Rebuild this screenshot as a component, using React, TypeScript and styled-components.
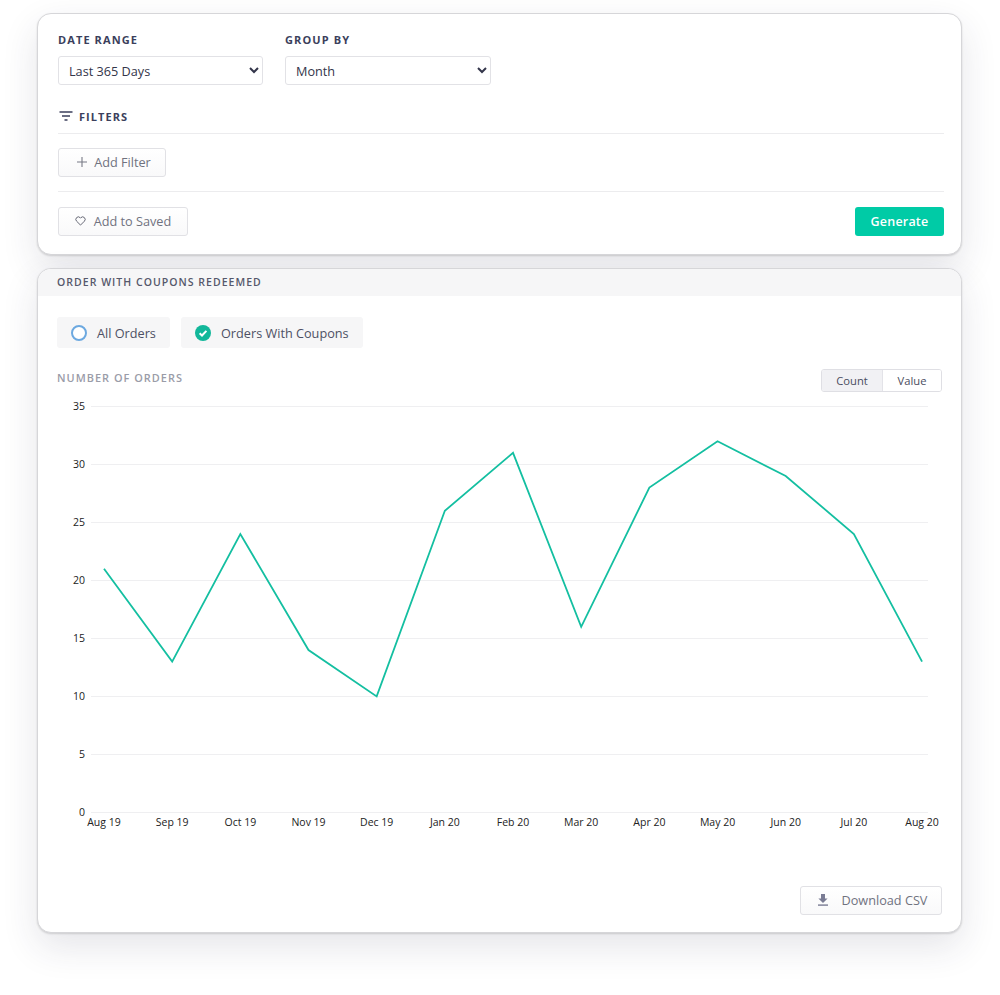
import React from "react";
import styled, { createGlobalStyle } from "styled-components";

const Global = createGlobalStyle`
  html, body { margin: 0; padding: 0; background: #fff; }
  body { font-family: "Open Sans", "Liberation Sans", sans-serif; }
  * { box-sizing: border-box; }
`;

const Page = styled.div`
  width: 1000px;
  height: 995px;
  padding: 13px 38px 0 37px;
  display: flex;
  flex-direction: column;
  gap: 13px;
  overflow: hidden;
`;

const Card = styled.section`
  background: #fff;
  border: 1px solid #d6d6d9;
  border-radius: 14px;
  box-shadow: 0 1px 2px rgba(0, 0, 0, 0.14), 0 14px 36px rgba(40, 44, 70, 0.12);
  overflow: hidden;
`;

const FilterCard = styled(Card)`
  height: 242px;
  padding: 18px 17px 0 20px;
`;

const FieldRow = styled.div`
  display: flex;
  gap: 22px;
`;

const Field = styled.div`
  display: flex;
  flex-direction: column;
  gap: 9px;
`;

const FieldLabel = styled.label`
  font-size: 11px;
  line-height: 15px;
  font-weight: 700;
  letter-spacing: 1.1px;
  color: #3b3f5c;
`;

const Select = styled.select<{ $w: number }>`
  width: ${(p) => p.$w}px;
  height: 29px;
  border: 1px solid #e2e2e6;
  border-radius: 3px;
  background: #fff;
  color: #33354a;
  font-family: inherit;
  font-size: 12.7px;
  padding: 0 2px 0 6px;
`;

const FilterHead = styled.div`
  display: flex;
  align-items: center;
  gap: 6px;
  margin-top: 22px;
  height: 18px;
  padding-left: 1px;
  font-size: 11px;
  font-weight: 700;
  letter-spacing: 1.05px;
  color: #3b3f5c;
`;

const Rule = styled.div<{ $top: number }>`
  height: 1px;
  background: #ececee;
  margin-top: ${(p) => p.$top}px;
`;

const GhostButton = styled.button<{ $w: number; $top?: number; $gap?: number; $left?: number }>`
  display: flex;
  align-items: center;
  justify-content: center;
  gap: ${(p) => p.$gap ?? 7}px;
  width: ${(p) => p.$w}px;
  height: 29px;
  margin-top: ${(p) => p.$top ?? 0}px;
  border: 1px solid #e1e1e5;
  border-radius: 3px;
  background: linear-gradient(#ffffff, #f9f9fa);
  color: #70727f;
  font-family: inherit;
  font-size: 12.7px;
  padding: 0 0 2px ${(p) => p.$left ?? 0}px;
`;

const ActionRow = styled.div`
  display: flex;
  justify-content: space-between;
  align-items: center;
  margin-top: 15px;
`;

const Generate = styled.button`
  width: 89px;
  height: 29px;
  border: 0;
  border-radius: 3px;
  background: #00cba6;
  color: #fff;
  font-family: inherit;
  font-size: 12.5px;
  font-weight: 600;
  letter-spacing: 0.2px;
  padding: 0;
`;

const ChartCard = styled(Card)`
  height: 665px;
`;

const CardTitle = styled.header`
  height: 27px;
  background: #f6f6f7;
  padding: 0 0 2px 19px;
  display: flex;
  align-items: center;
  font-size: 10.5px;
  font-weight: 600;
  letter-spacing: 1.03px;
  color: #55586b;
`;

const TabRow = styled.div`
  display: flex;
  gap: 11px;
  margin: 21px 0 0 19px;
`;

const Tab = styled.div<{ $w: number }>`
  display: flex;
  align-items: center;
  gap: 10px;
  width: ${(p) => p.$w}px;
  height: 31px;
  padding-left: 14px;
  background: #f6f6f7;
  border-radius: 3px;
  font-size: 12.7px;
  color: #4d5064;
`;

const Ring = styled.span`
  width: 16px;
  height: 16px;
  border-radius: 50%;
  border: 2px solid #6da9e0;
  background: #fff;
`;

const ChartHead = styled.div`
  display: flex;
  justify-content: space-between;
  align-items: center;
  margin: 21px 19px 0 19px;
  height: 23px;
`;

const AxisTitle = styled.div`
  font-size: 10.9px;
  font-weight: 600;
  letter-spacing: 1.03px;
  color: #9a9ca8;
  padding-bottom: 6px;
`;

const Toggle = styled.div`
  display: flex;
  height: 23px;
  border: 1px solid #dfdfe4;
  border-radius: 3px;
  overflow: hidden;
`;

const ToggleItem = styled.div<{ $on?: boolean; $w: number }>`
  width: ${(p) => p.$w}px;
  display: flex;
  align-items: center;
  justify-content: center;
  font-size: 11.2px;
  color: #4a4d60;
  background: ${(p) => (p.$on ? "#f1f1f4" : "#fff")};
  border-right: ${(p) => (p.$on ? "1px solid #e3e3e8" : "0")};
`;

const Plot = styled.svg`
  display: block;
  width: 923px;
  height: 450px;
  font-family: "Open Sans", "Liberation Sans", sans-serif;
`;

const Footer = styled.div`
  display: flex;
  justify-content: flex-end;
  margin: 44px 19px 0 0;
`;

const values = [21, 13, 24, 14, 10, 26, 31, 16, 28, 32, 29, 24, 13];
const months = ["Aug 19", "Sep 19", "Oct 19", "Nov 19", "Dec 19", "Jan 20", "Feb 20", "Mar 20", "Apr 20", "May 20", "Jun 20", "Jul 20", "Aug 20"];
const ticks = [35, 30, 25, 20, 15, 10, 5, 0];

// The plot's origin on the page
const OX = 38;
const OY = 392;
const px = (i: number) => 104 + i * 68.17 - OX;
const py = (v: number) => 812 - v * 11.6 - OY;

export default function App() {
  return (
    <Page>
      <Global />
      <FilterCard>
        <FieldRow>
          <Field>
            <FieldLabel>DATE RANGE</FieldLabel>
            <Select $w={205} defaultValue="Last 365 Days">
              <option>Last 365 Days</option>
            </Select>
          </Field>
          <Field>
            <FieldLabel>GROUP BY</FieldLabel>
            <Select $w={206} defaultValue="Month">
              <option>Month</option>
            </Select>
          </Field>
        </FieldRow>
        <FilterHead>
          <svg width="14" height="10" viewBox="0 0 14 10" fill="none" stroke="#3b3f5c" strokeWidth="1.3">
            <path d="M0.5 1h13M3 5h8M5.5 9h3" />
          </svg>
          FILTERS
        </FilterHead>
        <Rule $top={8} />
        <GhostButton $w={108} $top={14} $left={4}>
          <svg width="10" height="10" viewBox="0 0 10 10" fill="none" stroke="#777985" strokeWidth="1.1">
            <path d="M5 0v10M0 5h10" />
          </svg>
          Add Filter
        </GhostButton>
        <Rule $top={14} />
        <ActionRow>
          <GhostButton $w={130} $gap={8}>
            <svg width="11" height="10" viewBox="0 0 24 22" fill="none" stroke="#666875" strokeWidth="2.2" strokeLinejoin="round">
              <path d="M12 20 3.4 11.4a5.6 5.6 0 0 1 0-7.8 5.4 5.4 0 0 1 7.7 0l.9.9.9-.9a5.4 5.4 0 0 1 7.7 0 5.6 5.6 0 0 1 0 7.8Z" />
            </svg>
            Add to Saved
          </GhostButton>
          <Generate>Generate</Generate>
        </ActionRow>
      </FilterCard>

      <ChartCard>
        <CardTitle>ORDER WITH COUPONS REDEEMED</CardTitle>
        <TabRow>
          <Tab $w={113}>
            <Ring />
            All Orders
          </Tab>
          <Tab $w={182}>
            <svg width="16" height="16" viewBox="0 0 16 16">
              <circle cx="8" cy="8" r="8" fill="#12b79a" />
              <path d="M4.6 8.3 7 10.5l4.4-4.6" fill="none" stroke="#fff" strokeWidth="2" />
            </svg>
            Orders With Coupons
          </Tab>
        </TabRow>
        <ChartHead>
          <AxisTitle>NUMBER OF ORDERS</AxisTitle>
          <Toggle>
            <ToggleItem $on $w={61}>Count</ToggleItem>
            <ToggleItem $w={58}>Value</ToggleItem>
          </Toggle>
        </ChartHead>
        <Plot viewBox="0 0 923 450">
          {ticks.map((t) => (
            <g key={t}>
              <line x1={91 - OX} x2={928 - OX} y1={py(t) + 0.5} y2={py(t) + 0.5} stroke="#efeff1" />
              <text x={85 - OX} y={py(t) + 4} fontSize="10.5" fill="#222" textAnchor="end">{t}</text>
            </g>
          ))}
          {months.map((m, i) => (
            <text key={m} x={px(i)} y={812 + 14 - OY} fontSize="10.5" fill="#222" textAnchor="middle">{m}</text>
          ))}
          <polyline
            points={values.map((v, i) => `${px(i)},${py(v) + 0.4}`).join(" ")}
            fill="none"
            stroke="#14bfa1"
            strokeWidth="1.8"
          />
        </Plot>
        <Footer>
          <GhostButton $w={142} $gap={12} $left={1}>
            <svg width="14" height="14" viewBox="0 0 14 14" fill="#7a7c94">
              <path d="M5 1h4v4.5h2.6L7 10 2.4 5.5H5Z" />
              <rect x="2" y="11.4" width="10" height="1.4" />
            </svg>
            Download CSV
          </GhostButton>
        </Footer>
      </ChartCard>
    </Page>
  );
}
